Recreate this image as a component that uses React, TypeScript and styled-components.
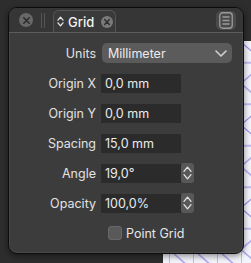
import React from "react";
import styled, { createGlobalStyle } from "styled-components";

const Global = createGlobalStyle`
  html, body { margin: 0; padding: 0; background: #2d2d2d; }
  body { width: 251px; height: 263px; overflow: hidden; font-family: "Inter", "Liberation Sans", sans-serif; }
`;

const Stage = styled.div`
  position: relative;
  width: 251px;
  height: 263px;
  background: #2d2d2d;
`;

const Canvas = styled.svg`
  position: absolute;
  left: 163px;
  top: 41px;
  width: 88px;
  height: 222px;
  background: #f3f3fb;
`;

const Window = styled.div`
  position: absolute;
  left: 8px;
  top: 7px;
  width: 236px;
  height: 247px;
  box-sizing: border-box;
  border-radius: 9px;
  border: 1px solid #0c0c0c;
  background: #3c3c3c;
  box-shadow: inset 0 0 0 1px rgba(255, 255, 255, 0.07), 0 2px 6px rgba(0, 0, 0, 0.45);
  overflow: hidden;
  display: flex;
  flex-direction: column;
`;

const TabBar = styled.div`
  height: 25px;
  flex: none;
  box-sizing: border-box;
  display: flex;
  align-items: flex-end;
  padding: 0 6px 0 10px;
  background: #363636;
  border-bottom: 1px solid #5c5c5c;
`;

const CloseDot = styled.div<{ $size: number; $bg: string }>`
  width: ${(p) => p.$size}px;
  height: ${(p) => p.$size}px;
  border-radius: 50%;
  background: ${(p) => p.$bg};
  display: flex;
  align-items: center;
  justify-content: center;
  flex: none;
`;

const LeadSlot = styled.div`
  height: 24px;
  display: flex;
  align-items: center;
  gap: 8px;
`;

const Grip = styled.div`
  width: 4px;
  height: 15px;
  border-left: 1.5px solid #555;
  border-right: 1.5px solid #555;
  box-sizing: border-box;
`;

const Tab = styled.div`
  margin-left: 8px;
  width: 63px;
  height: 22px;
  box-sizing: border-box;
  border: 1px solid #555;
  border-bottom: none;
  border-radius: 6px 6px 0 0;
  background: #3a3a3a;
  display: flex;
  align-items: center;
  padding: 0 2px 0 3px;
  gap: 4px;
  color: #f2f2f2;
  font-size: 13px;
  font-weight: 500;
`;

const TabLabel = styled.span`
  flex: 1;
`;

const Spacer = styled.div`
  flex: 1;
`;

const MenuButton = styled.div`
  width: 20px;
  height: 19px;
  margin-bottom: 2px;
  margin-right: 1px;
  border-radius: 5px;
  background: #4a4a4a;
  display: flex;
  align-items: center;
  justify-content: center;
`;

const Form = styled.div`
  display: grid;
  grid-template-columns: 87px 1fr;
  column-gap: 5px;
  grid-auto-rows: 30px;
  padding-top: 5px;
  align-items: center;
`;

const Label = styled.div`
  text-align: right;
  color: #e2e2e2;
  font-size: 12.5px;
`;

const Control = styled.div`
  display: flex;
  align-items: center;
`;

const Select = styled.div`
  width: 130px;
  height: 20px;
  margin-left: 1px;
  box-sizing: border-box;
  border-radius: 5px;
  background: #5b5b5b;
  display: flex;
  align-items: center;
  padding: 0 5px 0 6px;
  color: #ececec;
  font-size: 12.5px;
`;

const Field = styled.div`
  width: 80px;
  height: 19px;
  box-sizing: border-box;
  background: #2b2b2b;
  display: flex;
  align-items: center;
  padding-left: 4px;
  color: #ececec;
  font-size: 12.5px;
`;

const Stepper = styled.div`
  width: 13px;
  height: 20px;
  border-radius: 3px;
  background: #585858;
  display: flex;
  align-items: center;
  justify-content: center;
`;

const CheckRow = styled.label`
  display: flex;
  align-items: center;
  gap: 4px;
  margin-left: 7px;
  color: #e6e6e6;
  font-size: 12.5px;
`;

const Box = styled.div`
  width: 14px;
  height: 14px;
  box-sizing: border-box;
  border-radius: 3px;
  background: #595959;
  border: 1px solid #686868;
`;

const XMark = ({ size, color }: { size: number; color: string }) => (
  <svg width={size} height={size} viewBox="0 0 10 10">
    <path d="M2 2L8 8M8 2L2 8" stroke={color} strokeWidth="1.8" strokeLinecap="round" />
  </svg>
);

const UpDown = ({ color, w, h }: { color: string; w: number; h: number }) => (
  <svg width={w} height={h} viewBox={`0 0 ${w} ${h}`}>
    <path
      d={`M1 ${h * 0.38}L${w / 2} 1.2L${w - 1} ${h * 0.38}M1 ${h * 0.62}L${w / 2} ${h - 1.2}L${w - 1} ${h * 0.62}`}
      stroke={color}
      strokeWidth="1.3"
      fill="none"
      strokeLinecap="round"
      strokeLinejoin="round"
    />
  </svg>
);

const Chevron = () => (
  <svg width="12" height="7" viewBox="0 0 12 7">
    <path d="M1 1L6 6L11 1" stroke="#d0d0d0" strokeWidth="1.6" fill="none" strokeLinecap="round" strokeLinejoin="round" />
  </svg>
);

const fields: { label: string; value: string; stepper?: boolean }[] = [
  { label: "Origin X", value: "0,0 mm" },
  { label: "Origin Y", value: "0,0 mm" },
  { label: "Spacing", value: "15,0 mm" },
  { label: "Angle", value: "19,0°", stepper: true },
  { label: "Opacity", value: "100,0%", stepper: true },
];

export default function App() {
  return (
    <>
      <Global />
      <Stage>
        <Canvas viewBox="0 0 88 222">
          <defs>
            <pattern id="tri" width="24" height="41.5" patternUnits="userSpaceOnUse" x="6" y="1">
              <path d="M0 0L24 20.75L0 41.5M0 20.75H24M0 0V41.5" stroke="#8c86ea" strokeWidth="1" fill="none" />
            </pattern>
          </defs>
          <rect width="88" height="222" fill="url(#tri)" />
        </Canvas>
        <Window>
          <TabBar>
            <LeadSlot>
              <CloseDot $size={14} $bg="#686868">
                <XMark size={9} color="#2c2c2c" />
              </CloseDot>
              <Grip />
            </LeadSlot>
            <Tab>
              <UpDown color="#e8e8e8" w={7} h={11} />
              <TabLabel>Grid</TabLabel>
              <CloseDot $size={12} $bg="#7a7a7a">
                <XMark size={8} color="#2e2e2e" />
              </CloseDot>
            </Tab>
            <Spacer />
            <MenuButton>
              <svg width="14" height="17" viewBox="0 0 14 17">
                <rect x="0.75" y="0.75" width="12.5" height="15.5" rx="3" stroke="#9a9a9a" strokeWidth="1.3" fill="none" />
                <path d="M3.5 5H10.5M3.5 8.5H10.5M3.5 12H10.5" stroke="#9a9a9a" strokeWidth="1.3" />
              </svg>
            </MenuButton>
          </TabBar>
          <Form>
            <Label>Units</Label>
            <Control>
              <Select>
                <Spacer as="span">Millimeter</Spacer>
                <Chevron />
              </Select>
            </Control>
            {fields.map((f) => (
              <React.Fragment key={f.label}>
                <Label>{f.label}</Label>
                <Control>
                  <Field>{f.value}</Field>
                  {f.stepper && (
                    <Stepper>
                      <UpDown color="#e4e4e4" w={9} h={14} />
                    </Stepper>
                  )}
                </Control>
              </React.Fragment>
            ))}
            <span />
            <Control>
              <CheckRow>
                <Box />
                Point Grid
              </CheckRow>
            </Control>
          </Form>
        </Window>
      </Stage>
    </>
  );
}
